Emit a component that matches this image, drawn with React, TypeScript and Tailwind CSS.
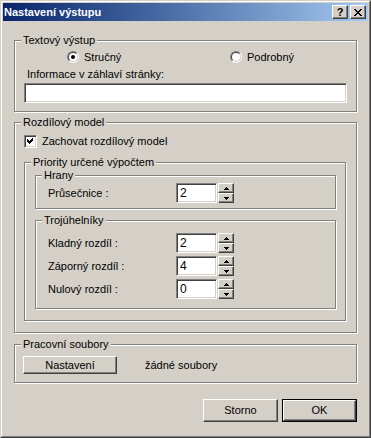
import type { ReactNode } from 'react'

// classic 3D edges
const raised =
  'border border-t-white border-l-white border-r-[#404040] border-b-[#404040] shadow-[inset_-1px_-1px_0_#808080] bg-[#d4d0c8]'
const sunken =
  'border border-t-[#808080] border-l-[#808080] border-r-white border-b-white shadow-[inset_1px_1px_0_#404040,inset_-1px_-1px_0_#d4d0c8] bg-white'

function Group({ label, className = '', children }: { label: string; className?: string; children?: ReactNode }) {
  return (
    <div
      className={`flex flex-col border border-[#808080] shadow-[inset_1px_1px_0_#ffffff,1px_1px_0_#ffffff] ${className}`}
    >
      <span className="-mt-[7px] ml-[6px] self-start bg-[#d4d0c8] px-[2px] leading-[13px]">{label}</span>
      {children}
    </div>
  )
}

function Radio({ checked }: { checked?: boolean }) {
  return (
    <span className="flex h-[12px] w-[12px] shrink-0 rounded-full border border-t-[#808080] border-l-[#808080] border-r-white border-b-white">
      <span className="flex h-full w-full items-center justify-center rounded-full border border-t-[#404040] border-l-[#404040] border-r-[#d4d0c8] border-b-[#d4d0c8] bg-white">
        {checked && <span className="h-[4px] w-[4px] rounded-full bg-black" />}
      </span>
    </span>
  )
}

function Arrow({ down }: { down?: boolean }) {
  return (
    <svg width="5" height="3" viewBox="0 0 5 3" shapeRendering="crispEdges">
      {down ? (
        <>
          <rect x="0" y="0" width="5" height="1" fill="#000" />
          <rect x="1" y="1" width="3" height="1" fill="#000" />
          <rect x="2" y="2" width="1" height="1" fill="#000" />
        </>
      ) : (
        <>
          <rect x="2" y="0" width="1" height="1" fill="#000" />
          <rect x="1" y="1" width="3" height="1" fill="#000" />
          <rect x="0" y="2" width="5" height="1" fill="#000" />
        </>
      )}
    </svg>
  )
}

function SpinRow({ label, value }: { label: string; value: string }) {
  return (
    <div className="ml-[12px] flex h-[20px] items-center">
      <span className="w-[128px] leading-[13px]">{label}</span>
      <div className={`flex h-[20px] w-[41px] items-center pl-[3px] text-[12px] ${sunken}`}>{value}</div>
      <div className="ml-[1px] flex h-[20px] w-[16px] flex-col">
        <div className={`flex h-[10px] items-center justify-center ${raised}`}>
          <Arrow />
        </div>
        <div className={`flex h-[10px] items-center justify-center ${raised}`}>
          <Arrow down />
        </div>
      </div>
    </div>
  )
}

export default function App() {
  return (
    <div className="font-['Liberation_Sans',Arial,sans-serif] text-[11px] text-black">
      <div className="h-[438px] w-[371px] border border-t-[#d4d0c8] border-l-[#d4d0c8] border-r-[#404040] border-b-[#404040] bg-[#d4d0c8]">
        <div className="flex h-full flex-col border border-t-white border-l-white border-r-[#808080] border-b-[#808080] p-[1px]">
          {/* title bar */}
          <div className="flex h-[18px] items-center bg-gradient-to-r from-[#0a246a] to-[#a6caf0] pl-[1px] pr-[2px]">
            <span className="text-[11px] font-bold text-white">Nastavení výstupu</span>
            <div className={`ml-auto flex h-[14px] w-[16px] items-center justify-center text-[11px] font-bold leading-none ${raised}`}>
              ?
            </div>
            <div className={`ml-[2px] flex h-[14px] w-[16px] items-center justify-center ${raised}`}>
              <svg width="8" height="7" viewBox="0 0 8 7" shapeRendering="crispEdges">
                <path d="M0 0h2v1h-2zM6 0h2v1h-2zM1 1h2v1h-2zM5 1h2v1h-2zM2 2h4v1h-4zM3 3h2v1h-2zM2 4h4v1h-4zM1 5h2v1h-2zM5 5h2v1h-2zM0 6h2v1h-2zM6 6h2v1h-2z" fill="#000" />
              </svg>
            </div>
          </div>

          {/* Textový výstup */}
          <Group label="Textový výstup" className="ml-[11px] mt-[19px] w-[343px] pb-[8px]">
            <div className="mt-[4px] flex h-[12px] items-center">
              <div className="ml-[52px] flex w-[163px] items-center">
                <Radio checked />
                <span className="ml-[5px] leading-[13px]">Stručný</span>
              </div>
              <div className="flex items-center">
                <Radio />
                <span className="ml-[5px] leading-[13px]">Podrobný</span>
              </div>
            </div>
            <span className="ml-[12px] mt-[5px] leading-[13px]">Informace v záhlaví stránky:</span>
            <div className={`ml-[9px] mt-[2px] h-[20px] w-[323px] ${sunken}`} />
          </Group>

          {/* Rozdílový model */}
          <Group label="Rozdílový model" className="ml-[11px] mt-[10px] w-[343px] pb-[11px]">
            <div className="ml-[9px] mt-[6px] flex h-[13px] items-center">
              <div className={`flex h-[13px] w-[13px] items-center justify-center ${sunken}`}>
                <svg width="7" height="7" viewBox="0 0 7 7" shapeRendering="crispEdges">
                  <path d="M6 0v3h-1v1h-1v1h-1v1h-1v-1h-1v-1h-1v-3h1v1h1v1h1v-1h1v-1h1v-1z" fill="#000" />
                </svg>
              </div>
              <span className="ml-[5px] leading-[13px]">Zachovat rozdílový model</span>
            </div>

            <Group label="Priority určené výpočtem" className="ml-[9px] mt-[14px] w-[322px] pb-[11px]">
              <Group label="Hrany" className="ml-[10px] mt-[6px] w-[301px] pb-[5px]">
                <div className="mt-[1px]">
                  <SpinRow label="Průsečnice :" value="2" />
                </div>
              </Group>

              <Group label="Trojúhelníky" className="ml-[10px] mt-[11px] w-[301px] pb-[9px]">
                <div className="mt-[6px] flex flex-col gap-[3px]">
                  <SpinRow label="Kladný rozdíl :" value="2" />
                  <SpinRow label="Záporný rozdíl :" value="4" />
                  <SpinRow label="Nulový rozdíl :" value="0" />
                </div>
              </Group>
            </Group>
          </Group>

          {/* Pracovní soubory */}
          <Group label="Pracovní soubory" className="ml-[11px] mt-[11px] w-[343px] pb-[8px]">
            <div className="mt-[5px] flex items-center">
              <div className={`ml-[8px] flex h-[18px] w-[94px] items-center justify-center ${raised}`}>Nastavení</div>
              <span className="ml-[28px] leading-[13px]">žádné soubory</span>
            </div>
          </Group>

          {/* dialog buttons */}
          <div className="ml-[200px] mt-[16px] flex gap-[4px]">
            <div className={`flex h-[23px] w-[75px] items-center justify-center ${raised}`}>Storno</div>
            <div className="h-[23px] w-[75px] border border-black">
              <div className={`flex h-full w-full items-center justify-center ${raised}`}>OK</div>
            </div>
          </div>
        </div>
      </div>
    </div>
  )
}
